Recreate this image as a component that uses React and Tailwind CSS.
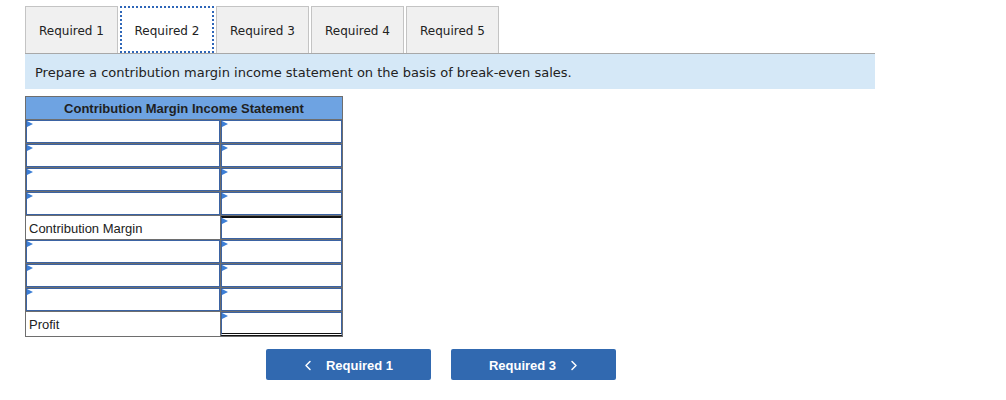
import React from 'react';

const tabs = ['Required 1', 'Required 2', 'Required 3', 'Required 4', 'Required 5'];

const rows = [
  { left: null, right: 'input' },
  { left: null, right: 'input' },
  { left: null, right: 'input' },
  { left: null, right: 'input' },
  { left: 'Contribution Margin', right: 'total' },
  { left: null, right: 'input' },
  { left: null, right: 'input' },
  { left: null, right: 'input' },
  { left: 'Profit', right: 'final' },
];

function Marker() {
  return (
    <span className="absolute left-0 top-0 w-0 h-0 border-l-[6px] border-l-[#3d7fd6] border-y-[3px] border-y-transparent" />
  );
}

function InputCell({ extra = '' }) {
  return (
    <div className={`relative h-full border border-[#3b63a3] bg-white ${extra}`}>
      <Marker />
    </div>
  );
}

function Chevron({ dir }) {
  return (
    <svg width="8" height="11" viewBox="0 0 8 11" fill="none" stroke="white" strokeWidth="1.5" strokeLinecap="round" strokeLinejoin="round">
      {dir === 'left' ? <polyline points="6,1.5 2,5.5 6,9.5" /> : <polyline points="2,1.5 6,5.5 2,9.5" />}
    </svg>
  );
}

export default function App() {
  return (
    <div className="w-[1006px] h-[400px] bg-white pt-[6px] pl-[25px]" style={{ fontFamily: '"DejaVu Sans", Verdana, sans-serif' }}>
      {/* Tabs */}
      <div className="flex gap-[2px] w-[850px] border-b border-[#a8a8a8]">
        {tabs.map((t, i) => (
          <div
            key={t}
            className={
              i === 1
                ? 'w-[94px] h-[47px] pt-[2px] flex items-center justify-center text-[12px] text-[#222] bg-white border-2 border-dotted border-[#2e66b8] -mb-[1px]'
                : 'w-[93px] h-[47px] pt-[2px] flex items-center justify-center text-[12px] text-[#222] bg-[#f0f0f0] border border-[#c4c4c4] border-b-0'
            }
          >
            {t}
          </div>
        ))}
      </div>

      {/* Instructions */}
      <div className="w-[850px] h-[35px] pt-[2px] bg-[#d5e8f7] flex items-center pl-[10px] text-[13px] text-[#222]">
        Prepare a contribution margin income statement on the basis of break-even sales.
      </div>

      {/* Statement table */}
      <div className="mt-[7px] w-[318px] border border-[#6e6e6e]" style={{ fontFamily: '"Liberation Sans", Arial, sans-serif' }}>
        <div className="h-[23px] pt-[2px] bg-[#6ea3e2] border-b border-[#6e6e6e] flex items-center justify-center text-[13px] font-bold text-[#1f1f1f]">
          Contribution Margin Income Statement
        </div>
        {rows.map((r, i) => (
          <div key={i} className={`grid grid-cols-[195px_1fr] h-[24px] ${i < rows.length - 1 ? 'border-b border-[#6e6e6e]' : ''}`}>
            <div className="border-r border-[#6e6e6e] h-full">
              {r.left ? (
                <div className="h-full flex items-center pl-[3px] pt-[2px] text-[13px] text-[#222]">{r.left}</div>
              ) : (
                <InputCell />
              )}
            </div>
            <div className="h-full">
              {r.right === 'input' && <InputCell />}
              {r.right === 'total' && <InputCell extra="border-t-2 border-t-[#111]" />}
              {r.right === 'final' && <InputCell extra="border-b-[3px] border-b-[#111] border-double" />}
            </div>
          </div>
        ))}
      </div>

      {/* Navigation buttons */}
      <div className="flex gap-[20px] ml-[241px] mt-[12px]" style={{ fontFamily: '"Liberation Sans", Arial, sans-serif' }}>
        <button className="w-[165px] h-[31px] pt-[2px] bg-[#3169b0] rounded-[2px] text-white text-[13px] font-bold flex items-center justify-center">
          <span className="mr-[14px] -mt-[1px]"><Chevron dir="left" /></span>
          Required 1
        </button>
        <button className="w-[165px] h-[31px] pt-[2px] bg-[#3169b0] rounded-[2px] text-white text-[13px] font-bold flex items-center justify-center">
          Required 3
          <span className="ml-[14px] -mt-[1px]"><Chevron dir="right" /></span>
        </button>
      </div>
    </div>
  );
}
